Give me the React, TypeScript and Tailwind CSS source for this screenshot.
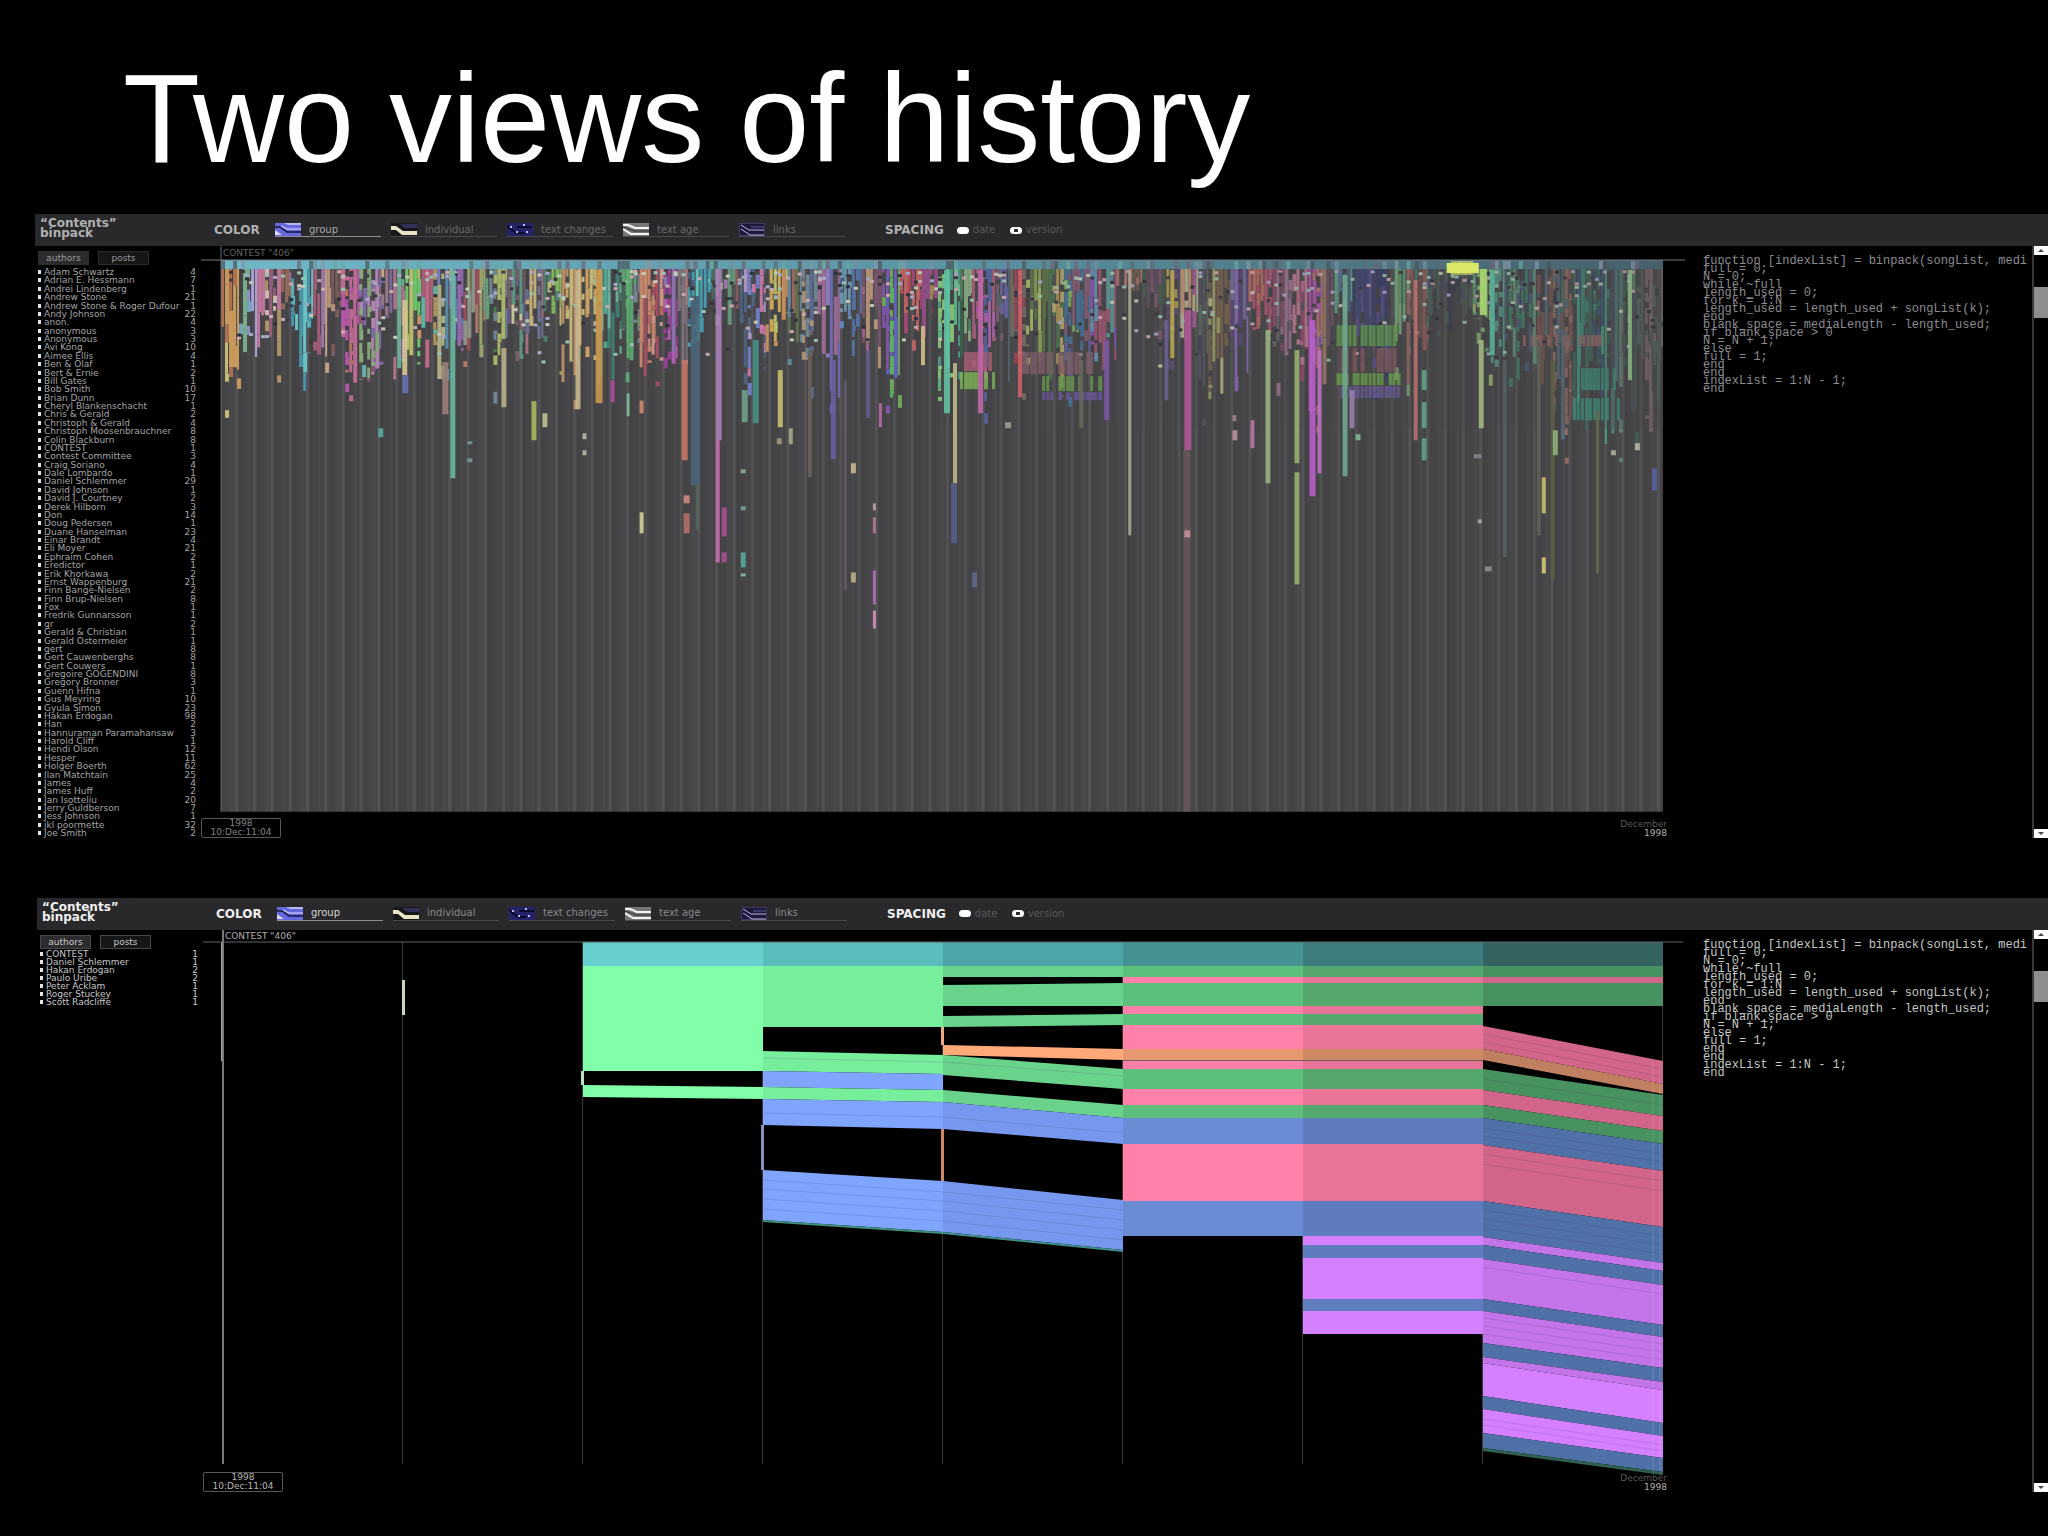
import React from "react";

type Author = [name: string, posts: number];
type Band = [leftTop: number, leftBottom: number, rightTop: number, rightBottom: number, color: string];
type Streak = [x: number, width: number, top: number, bottom: number, color: string];
type Region = [start: number, depth: number, colors: string[]];

const ALL_AUTHORS: Author[] = [
  ["Adam Schwartz", 4], ["Adrian E. Hessmann", 7], ["Andrei Lindenberg", 1], ["Andrew Stone", 21],
  ["Andrew Stone & Roger Dufour", 1], ["Andy Johnson", 22], ["anon.", 4], ["anonymous", 3], ["Anonymous", 3],
  ["Avi Kong", 10], ["Aimee Ellis", 4], ["Ben & Olaf", 1], ["Bert & Ernie", 2], ["Bill Gates", 1],
  ["Bob Smith", 10], ["Brian Dunn", 17], ["Cheryl Blankenschacht", 1], ["Chris & Gerald", 2],
  ["Christoph & Gerald", 4], ["Christoph Moosenbrauchner", 8], ["Colin Blackburn", 8], ["CONTEST", 1],
  ["Contest Committee", 3], ["Craig Soriano", 4], ["Dale Lombardo", 1], ["Daniel Schlemmer", 29],
  ["David Johnson", 1], ["David J. Courtney", 2], ["Derek Hilborn", 3], ["Don", 14], ["Doug Pedersen", 1],
  ["Duane Hanselman", 23], ["Einar Brandt", 4], ["Eli Moyer", 21], ["Ephraim Cohen", 2], ["Eredictor", 1],
  ["Erik Khorkawa", 2], ["Ernst Wappenburg", 21], ["Finn Bange-Nielsen", 2], ["Finn Brup-Nielsen", 8], ["Fox", 1],
  ["Fredrik Gunnarsson", 1], ["gr", 2], ["Gerald & Christian", 1], ["Gerald Ostermeier", 1], ["gert", 8],
  ["Gert Cauwenberghs", 8], ["Gert Couwers", 1], ["Gregoire GOGENDINI", 8], ["Gregory Bronner", 3],
  ["Guenn Hifna", 1], ["Gus Meyring", 10], ["Gyula Simon", 23], ["Hakan Erdogan", 98], ["Han", 2],
  ["Hannuraman Paramahansaw", 3], ["Harold Cliff", 1], ["Hendi Olson", 12], ["Hesper", 11],
  ["Holger Boerth", 62], ["Ilan Matchtain", 25], ["James", 4], ["James Huff", 2], ["Jan Isotteliu", 20],
  ["Jerry Guldberson", 7], ["Jess Johnson", 1], ["jkl poormette", 32], ["Joe Smith", 2],
];

const CONTEST_AUTHORS: Author[] = [
  ["CONTEST", 1], ["Daniel Schlemmer", 1], ["Hakan Erdogan", 2], ["Paulo Uribe", 2],
  ["Peter Acklam", 1], ["Roger Stuckey", 1], ["Scott Radcliffe", 1],
];

const CODE = `function [indexList] = binpack(songList, medi
full = 0;
N = 0;
while ~full
length_used = 0;
for k = 1:N
length_used = length_used + songList(k);
end
blank_space = mediaLength - length_used;
if blank_space > 0
N = N + 1;
else
full = 1;
end
end
indexList = 1:N - 1;
end`;

const TABS = ["group", "individual", "text changes", "text age", "links"];

/* ---------- dense overview chart ---------- */

const REGIONS: Region[] = [
  [0, 105, ["#e0a860", "#d8d080", "#c07850"]],
  [18, 100, ["#98a0e0", "#80c090", "#b8b0f0", "#7cb8d0"]],
  [36, 85, ["#d080a8", "#e0d0c0", "#a06080", "#c0a070"]],
  [60, 50, ["#a07060", "#a870a8"]],
  [70, 115, ["#58c8d0", "#70d8d8", "#4aa0b8"]],
  [92, 90, ["#a880b8", "#d8b090", "#b06080"]],
  [106, 45, ["#806060", "#c8a080"]],
  [120, 115, ["#c85ab8", "#c08060", "#d070a0"]],
  [138, 115, ["#8870b8", "#c090c0", "#9a5878", "#90b880"]],
  [160, 80, ["#e0b878", "#7c70a8", "#a88090"]],
  [172, 100, ["#b060c0", "#70c0a0", "#c07898"]],
  [184, 95, ["#70d870", "#c8d070", "#e0a070"]],
  [200, 105, ["#d07090", "#60c8b0", "#c0a060", "#b86080"]],
  [216, 105, ["#7888d8", "#a070c0", "#c0c090", "#5898b8"]],
  [242, 95, ["#98a090", "#c08070", "#a8b070", "#a85060"]],
  [264, 90, ["#68b080", "#b8c870", "#7890a0", "#488858"]],
  [286, 85, ["#d8d8a0", "#7060a0", "#60a088", "#806070"]],
  [304, 90, ["#b07890", "#d8c080", "#7078a0"]],
  [322, 75, ["#88c860", "#c8d078", "#508870"]],
  [340, 105, ["#e0b068", "#d8c880", "#c89870"]],
  [378, 115, ["#50b8a0", "#70c0a8", "#408878"]],
  [400, 85, ["#60b078", "#8090a0", "#486858"]],
  [418, 100, ["#c86860", "#e0a090", "#b05068", "#d89070"]],
  [442, 95, ["#c060c0", "#a040a0", "#9878c0"]],
  [456, 90, ["#887880", "#d08880"]],
  [466, 75, ["#48a8c0", "#60d8d0", "#4a6890"]],
  [490, 60, ["#a880b8", "#c8d0a0", "#507068"]],
  [506, 70, ["#8a6060", "#9870a0", "#6aa080"]],
  [518, 100, ["#7888d8", "#d880b0", "#b8a0d0", "#506888"]],
  [544, 90, ["#e0c060", "#d89860", "#c8d070", "#e0b858"]],
  [566, 80, ["#60784c", "#6890a8", "#a07060"]],
  [580, 85, ["#7890a0", "#b8a080", "#6070a0", "#806860"]],
  [596, 115, ["#7870c8", "#9888d0", "#a870a0"]],
  [618, 95, ["#5878b0", "#6890d0", "#4868a0", "#70a0b8"]],
  [640, 100, ["#b86898", "#c8a080", "#805870"]],
  [660, 115, ["#6868d0", "#60c868", "#8858b8", "#78b860"]],
  [678, 70, ["#c84858", "#b04878", "#d06868"]],
  [700, 75, ["#a05090", "#b09060", "#704858"]],
  [716, 125, ["#60c890", "#78d0a0", "#50a890", "#90d880"]],
  [738, 120, ["#386848", "#508860", "#90b888"]],
  [750, 125, ["#d050c0", "#b868b8", "#5868a8", "#b06080"]],
  [774, 120, ["#6a68a8", "#806078", "#586870"]],
  [788, 110, ["#a84858", "#7a7068", "#485878"]],
  [804, 90, ["#b0c868", "#90a858", "#607848"]],
  [826, 115, ["#b8a058", "#507850", "#c0b070"]],
  [842, 130, ["#6060a0", "#80b860", "#4878a0", "#886078"]],
  [868, 135, ["#9058c0", "#a85878", "#60a0a0", "#7098c0"]],
  [894, 30, ["#a06888", "#706050", "#b87870"]],
  [920, 45, ["#605060", "#805870", "#486050"]],
  [944, 75, ["#b8a850", "#605080", "#585068"]],
  [958, 70, ["#c8c098", "#b060a0", "#d0a080"]],
  [976, 110, ["#484a58", "#585868", "#607060"]],
  [986, 120, ["#a8a868", "#806850", "#c8c088"]],
  [1008, 110, ["#9070c0", "#604880", "#7870a8"]],
  [1026, 75, ["#c87068", "#c05878", "#d89070"]],
  [1050, 90, ["#905070", "#706878", "#a87898"]],
  [1070, 110, ["#c86890", "#d080a0", "#a04870"]],
  [1086, 150, ["#c058b8", "#b070c8", "#d08080"]],
  [1100, 110, ["#a88068", "#705868", "#c8a088"]],
  [1112, 60, ["#5878a0", "#486888", "#60b090"]],
  [1130, 110, ["#383e70", "#40487c", "#485868", "#5a5098"]],
  [1172, 120, ["#60a878", "#80b880", "#a87068"]],
  [1188, 110, ["#a06058", "#705850", "#508070"]],
  [1206, 60, ["#484c68", "#506058", "#383c50"]],
  [1250, 90, ["#90c078", "#68a878", "#a8c870"]],
  [1268, 110, ["#58a890", "#406070", "#60b8a0"]],
  [1282, 150, ["#40886c", "#506080", "#68a080", "#4c6068"]],
  [1314, 150, ["#805850", "#a07068", "#507060", "#587080"]],
  [1350, 160, ["#40907c", "#48a890", "#405878", "#407060"]],
  [1384, 150, ["#50807c", "#446050", "#688878", "#4c5460"]],
  [1414, 145, ["#506c5c", "#585c60", "#587868", "#806c74"]],
];

const STREAKS: Streak[] = [
  [229, 5, 10, 218, "#6ab8a0"], [221, 6, 102, 154, "#9a8078"], [181, 5, 40, 115, "#d8c898"], [181, 6, 115, 133, "#6870b0"],
  [280, 5, 88, 147, "#b8b088"], [310, 5, 141, 180, "#a8b860"], [321, 5, 153, 167, "#c0c090"], [354, 5, 10, 149, "#c8b890"],
  [374, 7, 10, 143, "#c89850"], [389, 4, 120, 142, "#a850a0"], [405, 3, 10, 98, "#60b070"], [405, 3, 133, 156, "#80b898"],
  [460, 6, 100, 200, "#c87868"], [469, 9, 40, 225, "#4a6478"], [474, 4, 225, 270, "#566458"], [494, 6, 8, 180, "#a880b8"],
  [494, 4, 180, 302, "#c870b0"], [500, 5, 247, 276, "#a85090"], [500, 5, 292, 302, "#a85090"], [462, 6, 253, 273, "#b07068"],
  [462, 6, 235, 243, "#d08880"], [418, 4, 252, 273, "#d0d098"], [520, 6, 130, 162, "#70a088"], [531, 6, 80, 163, "#4a9088"],
  [556, 5, 110, 167, "#c8c070"], [586, 4, 90, 217, "#68645c"], [609, 5, 100, 199, "#6860a0"], [622, 3, 120, 330, "#655868"],
  [644, 4, 90, 158, "#605c88"], [657, 3, 143, 167, "#b868a8"], [651, 3, 310, 344, "#b070b8"], [651, 3, 350, 368, "#d090b8"],
  [651, 3, 243, 250, "#b8a0b0"], [651, 3, 257, 273, "#b07898"], [629, 5, 203, 213, "#c8b890"], [629, 5, 312, 322, "#b8b088"],
  [731, 4, 103, 223, "#c0b888"], [729, 6, 223, 283, "#566088"], [722, 6, 10, 153, "#60c0a0"], [157, 5, 168, 177, "#58a8a0"],
  [141, 4, 105, 117, "#70b8b8"], [519, 5, 292, 307, "#58a898"], [519, 5, 313, 316, "#80b8a8"], [519, 5, 246, 250, "#78a090"],
  [519, 5, 209, 213, "#90a898"], [361, 4, 173, 179, "#b8b8a0"], [361, 4, 190, 195, "#b8b8a0"], [246, 5, 181, 184, "#789898"],
  [246, 5, 198, 202, "#789898"], [555, 5, 178, 184, "#a09878"], [567, 4, 168, 184, "#a8a888"], [699, 4, 66, 105, "#d0c088"],
  [906, 3, 10, 275, "#a8a890"], [962, 7, 50, 190, "#b05898"], [961, 7, 190, 551, "#68565a"], [962, 6, 270, 277, "#c89098"],
  [1072, 5, 90, 203, "#98b070"], [1072, 5, 212, 324, "#98b070"], [1043, 5, 70, 223, "#98b080"], [1087, 6, 60, 236, "#b860c8"],
  [1095, 4, 90, 213, "#c070c0"], [1120, 5, 15, 216, "#70a890"], [1256, 5, 80, 168, "#a0b880"], [1257, 7, 5, 55, "#a8d870"],
  [1191, 4, 20, 180, "#b87070"], [1199, 5, 110, 130, "#60a088"], [1199, 5, 142, 168, "#60a088"], [1199, 5, 178, 200, "#60a088"],
  [1319, 4, 217, 253, "#c8c070"], [1319, 4, 297, 313, "#d0c878"], [1280, 4, 100, 297, "#566064"], [1328, 4, 100, 320, "#5e5e46"],
  [1373, 3, 150, 313, "#66684c"], [1429, 5, 208, 230, "#5860a0"], [1405, 4, 10, 120, "#88b080"], [750, 5, 312, 327, "#606888"],
  [1127, 5, 130, 168, "#9880a8"], [948, 4, 10, 98, "#b8a850"], [942, 4, 60, 140, "#6c6090"], [796, 4, 10, 137, "#d06068"],
  [756, 5, 10, 153, "#c068a8"], [1267, 5, 10, 95, "#58b098"], [857, 4, 100, 168, "#68685c"], [882, 5, 80, 160, "#7858a0"],
  [1028, 4, 160, 188, "#b878a8"], [1010, 5, 170, 180, "#b89098"], [1314, 4, 80, 275, "#5c6056"], [1010, 4, 155, 161, "#a08090"],
  [783, 6, 162, 168, "#98a090"], [1255, 4, 259, 263, "#a8a8a8"], [1262, 7, 306, 311, "#8c8c94"], [1330, 5, 170, 195, "#90b078"],
  [1388, 5, 190, 195, "#a8b098"], [1412, 5, 183, 190, "#b0b8a0"], [1251, 8, 194, 198, "#80848c"], [1133, 5, 174, 180, "#80b898"],
];

function random(seed: number) {
  let state = seed;
  return () => {
    state = (state * 1664525 + 1013904223) % 4294967296;
    return state / 4294967296;
  };
}

function buildRevisions(): Streak[] {
  const next = random(29);
  const cells: Streak[] = [];
  REGIONS.forEach(([start, depth, colors], index) => {
    const end = index + 1 < REGIONS.length ? REGIONS[index + 1][0] : 1440;
    for (let x = start; x < end; x += 4) {
      const limit = depth * (0.45 + next() * 0.75);
      const own = colors[Math.floor(next() * colors.length)];
      const calm = next() > 0.4;
      let y = 9;
      while (y < limit) {
        const height = calm ? 14 + next() * 46 : 3 + next() * 9;
        const stop = Math.min(y + height, limit);
        if (next() < (calm ? 0.92 : 0.76)) {
          const color = next() < 0.7 ? own : colors[Math.floor(next() * colors.length)];
          const width = Math.min(next() < 0.5 ? 4 : 3, end - x);
          cells.push([x, width, y, stop, color]);
        }
        y = stop;
      }
      if (next() < 0.2) {
        const top = limit + 4 + next() * 30;
        cells.push([x, 4, top, top + 3 + next() * 10, own]);
      }
    }
  });
  for (let i = 0; i < 480; i++) {
    const x = Math.floor(next() * 359) * 4;
    const y = 10 + next() * next() * 105;
    const tint = ["#d8e0c8", "#a8d8c0", "#e0b8c0", "#3c3a44", "#b8b8e0", "#302f38"][Math.floor(next() * 6)];
    cells.push([x, 4, y, y + 3, tint]);
  }
  return cells;
}

/* Runs of one author's text that keep the same line across many revisions. */
function buildShared(): Streak[] {
  const next = random(11);
  const runs: Streak[] = [
    [1114, 64, 65, 86, "#64a850"], [1114, 64, 88, 112, "#8c5c60"], [1114, 64, 113, 125, "#72b04c"],
    [1114, 64, 126, 138, "#7060a8"], [738, 36, 112, 129, "#84bc58"], [738, 30, 92, 111, "#b06078"],
    [820, 60, 116, 131, "#6ca050"], [820, 60, 132, 140, "#7058a8"], [800, 70, 92, 114, "#86606c"],
    [1350, 48, 108, 130, "#3c9880"], [1350, 48, 138, 160, "#3ca088"], [1300, 80, 75, 86, "#9c6c68"],
  ];
  return runs.flatMap(([x, w, top, bottom, color]) => {
    const strips: Streak[] = [];
    for (let i = 0; i < w; i += 4) {
      if (next() < 0.75) strips.push([x + i, next() < 0.5 ? 4 : 3, top, bottom, color]);
    }
    return strips;
  });
}

function buildBand(): Streak[] {
  const next = random(7);
  const out: Streak[] = [];
  for (let x = 0; x < 1440; x += 4) {
    if (next() < 0.3) {
      const tint = ["#8898a8", "#5c6c70", "#7890a0", "#68a8a0", "#706478", "#4c5458"][Math.floor(next() * 6)];
      out.push([x, 4, 1, 9, tint]);
    }
  }
  return out;
}

const REVISIONS = buildRevisions();
const SHARED = buildShared();
const BAND = buildBand();

function Bars({ bars, className }: { bars: Streak[]; className?: string }) {
  return (
    <g className={className}>
      {bars.map(([x, w, top, bottom, color], i) => (
        <rect key={i} x={x} y={top} width={w} height={bottom - top} fill={color} />
      ))}
    </g>
  );
}

function OverviewChart() {
  return (
    <svg viewBox="0 0 1440 551" className="block h-auto w-full overflow-visible" role="img" aria-label="All revisions by author">
      <defs>
        <pattern id="revisions" width="35.5" height="551" patternUnits="userSpaceOnUse">
          <rect width="35.5" height="551" fill="#444346" />
          <rect x="8" width="5" height="551" fill="#49484b" />
          <rect x="14" width="3" height="551" fill="#545355" />
          <rect x="26" width="3" height="551" fill="#49484b" />
          <rect x="32" width="3" height="551" fill="#525153" />
          <rect x="18" width="2" height="551" fill="#403f42" />
        </pattern>
        <linearGradient id="teal">
          <stop offset="0" stopColor="#70b8c8" />
          <stop offset="0.5" stopColor="#5a94a4" />
          <stop offset="1" stopColor="#45606a" />
        </linearGradient>
        <linearGradient id="fade">
          <stop offset="0.4" stopColor="#444346" stopOpacity="0" />
          <stop offset="1" stopColor="#444346" stopOpacity="0.3" />
        </linearGradient>
      </defs>
      <rect width="1440" height="551" fill="url(#revisions)" />
      <Bars bars={REVISIONS} className="opacity-85" />
      <Bars bars={SHARED} className="opacity-80" />
      <rect width="1440" height="160" y="9" fill="url(#fade)" />
      <Bars bars={STREAKS} className="opacity-90" />
      <rect width="1440" height="9" fill="url(#teal)" />
      <Bars bars={BAND} className="opacity-70" />
      <rect x="1224" y="3" width="32" height="10" fill="#dce868" />
      <rect x="1228" y="1" width="22" height="14" fill="#dce868" opacity="0.6" />
      <path d="M-20 0H1462" stroke="#77787c" />
      <path d="M0 -14V551" stroke="#6c6c70" />
    </svg>
  );
}

/* ---------- contest detail chart ---------- */

const STEP = 180;

const COLUMNS: Band[][] = [
  [],
  [],
  [
    [0, 24, 0, 24, "#68cfd0"], [24, 129, 24, 129, "#80ffa8"], [143, 155, 145, 157, "#80ffa8"],
  ],
  [
    [0, 24, 0, 24, "#5bbcbc"], [24, 85, 24, 85, "#76ee9c"], [109, 129, 113, 132, "#76ee9c"],
    [129, 145, 132, 148, "#7fa5ff"], [145, 157, 148, 160, "#76ee9c"], [157, 183, 160, 187, "#7fa5ff"],
    [228, 278, 239, 290, "#7fa5ff"], [278, 280, 290, 292, "#3f8f7c"],
  ],
  [
    [0, 24, 0, 24, "#4ea5a7"], [24, 35, 24, 35, "#6ad38b"], [43, 64, 41, 64, "#6ad38b"],
    [74, 85, 72, 83, "#6ad38b"], [103, 113, 107, 118, "#ffa878"], [113, 133, 127, 147, "#6ad38b"],
    [148, 160, 163, 176, "#6ad38b"], [160, 187, 176, 202, "#7598ee"], [239, 290, 258, 308, "#7598ee"],
    [290, 292, 308, 310, "#3f8f8c"],
  ],
  [
    [0, 24, 0, 24, "#459293"], [24, 35, 24, 35, "#5dbf7c"], [35, 41, 35, 41, "#ff80a8"],
    [41, 64, 41, 64, "#5dbf7c"], [64, 72, 64, 72, "#ff80a8"], [72, 83, 72, 83, "#5dbf7c"],
    [83, 107, 83, 107, "#ff80a8"], [107, 118, 107, 118, "#e79870"], [118, 119, 118, 119, "#70605c"],
    [119, 127, 119, 127, "#ff80a8"], [127, 147, 127, 147, "#5dbf7c"], [147, 163, 147, 163, "#ff80a8"],
    [163, 176, 163, 176, "#5dbf7c"], [176, 202, 176, 202, "#6a8cd5"], [202, 259, 202, 259, "#ff80a8"],
    [259, 294, 259, 294, "#6a8cd5"],
  ],
  [
    [0, 24, 0, 24, "#3f7c7e"], [24, 35, 24, 35, "#54a86d"], [35, 41, 35, 41, "#e87498"],
    [41, 64, 41, 64, "#54a86d"], [64, 72, 64, 72, "#e87498"], [72, 83, 72, 83, "#54a86d"],
    [83, 107, 83, 107, "#e87498"], [107, 118, 107, 118, "#d08864"], [118, 119, 118, 119, "#70605c"],
    [119, 127, 119, 127, "#e87498"], [127, 147, 127, 147, "#54a86d"], [147, 163, 147, 163, "#e87498"],
    [163, 176, 163, 176, "#54a86d"], [176, 202, 176, 202, "#5f7dbe"], [202, 259, 202, 259, "#e87498"],
    [259, 294, 259, 294, "#5f7dbe"], [294, 303, 294, 303, "#d580ff"], [303, 316, 303, 316, "#5f7dbe"],
    [316, 357, 316, 357, "#d580ff"], [357, 369, 357, 369, "#5f7dbe"], [369, 392, 369, 392, "#d580ff"],
  ],
  [
    [0, 24, 0, 24, "#336462"], [24, 35, 24, 35, "#489160"], [35, 41, 35, 41, "#d2658a"],
    [41, 64, 41, 64, "#489160"], [84, 107, 119, 142, "#d2658a"], [107, 118, 142, 152, "#bf7f60"],
    [127, 148, 153, 174, "#489160"], [148, 163, 174, 189, "#d2658a"], [163, 176, 189, 202, "#489160"],
    [176, 203, 202, 229, "#5070a8"], [203, 259, 229, 285, "#d2658a"], [259, 295, 285, 321, "#5070a8"],
    [295, 303, 321, 329, "#c274e8"], [303, 317, 329, 343, "#5070a8"], [317, 357, 343, 383, "#c274e8"],
    [357, 369, 383, 395, "#5070a8"], [369, 401, 395, 426, "#c274e8"], [401, 415, 426, 440, "#5070a8"],
    [415, 421, 440, 448, "#c274e8"], [421, 454, 448, 481, "#d580ff"], [454, 467, 481, 494, "#5070a8"],
    [467, 491, 494, 516, "#d580ff"], [491, 506, 516, 530, "#5070a8"], [506, 509, 530, 533, "#2f6050"],
  ],
];

const MARKS: Streak[] = [
  [-2, 3, 0, 119, "#a8aca8"], [179, 3, 38, 73, "#c8d8c0"], [358, 3, 129, 143, "#b8e0c0"], [538, 3, 183, 228, "#8890c0"],
  [718, 3, 85, 103, "#f0a880"], [718, 3, 187, 239, "#d08868"],
];

const HAIRLINES = [
  [3, 116, 120], [3, 171, 175], [3, 238, 250], [3, 247, 259], [3, 257, 269], [3, 267, 279],
  [4, 120, 134], [4, 175, 191], [4, 250, 268], [4, 259, 278], [4, 269, 288], [4, 279, 298],
  [7, 92, 127], [7, 100, 135], [7, 137, 163], [7, 186, 212], [7, 194, 220], [7, 212, 239], [7, 222, 249],
  [7, 268, 294], [7, 277, 303], [7, 286, 312], [7, 325, 352], [7, 376, 402], [7, 384, 410], [7, 392, 418],
  [7, 477, 503], [7, 483, 509],
];

function ContestChart() {
  return (
    <svg viewBox="0 0 1440 526" className="block h-auto w-full overflow-visible" role="img" aria-label="Contest revisions">
      {[1, 2, 3, 4, 5, 6, 7, 8].map((i) => (
        <path key={i} d={`M${i * STEP - 0.5} 0V522`} stroke="#39393b" />
      ))}
      {COLUMNS.map((bands, column) =>
        bands.map(([lt, lb, rt, rb, color], i) => {
          const left = column * STEP;
          const right = left + STEP;
          return <path key={`${column}-${i}`} d={`M${left} ${lt}L${right} ${rt}V${rb}L${left} ${lb}Z`} fill={color} />;
        }),
      )}
      {HAIRLINES.map(([column, from, to], i) => (
        <path key={i} d={`M${column * STEP} ${from}L${column * STEP + STEP} ${to}`} stroke="#302850" strokeOpacity="0.15" />
      ))}
      <Bars bars={MARKS} />
      <path d="M1430 119V530M1437 119V533" stroke="#ffffff" strokeOpacity="0.15" />
      <path d="M-20 0H1460" stroke="#606264" />
      <path d="M0 -12V522" stroke="#77787a" strokeWidth="2" />
    </svg>
  );
}

/* ---------- shared chrome ---------- */

function TabIcon({ kind }: { kind: string }) {
  return (
    <svg viewBox="0 0 26 13" className="h-[13px] w-[26px] shrink-0" aria-hidden="true">
      {kind === "group" && (
        <>
          <rect width="26" height="13" fill="#6468dc" />
          <path d="M0 0h26v2H13L9 0z" fill="#b8b8f0" />
          <path d="M0 4h5l7 5h14" fill="none" stroke="#14143c" strokeWidth="1.5" />
          <path d="M6 3l6 3h14" fill="none" stroke="#e0e0ff" />
          <path d="M0 7l7 5H0z" fill="#d8d8ff" />
        </>
      )}
      {kind === "individual" && (
        <>
          <rect width="26" height="13" fill="#18181a" />
          <path d="M9 1h17v4H14z" fill="#34305c" />
          <path d="M0 3h5l7 5h14v4H11L5 7H0z" fill="#e8e4c4" />
        </>
      )}
      {kind === "text changes" && (
        <>
          <rect width="26" height="13" fill="#242268" />
          <path d="M0 3l9 7h8M10 4h15" fill="none" stroke="#0c0c28" strokeWidth="2" />
          <path d="M3 4h2M16 2h2M9 9h2M19 9h2" stroke="#b8b8ff" strokeWidth="2" />
        </>
      )}
      {kind === "text age" && (
        <>
          <rect width="26" height="13" fill="#77777a" />
          <path d="M0 2l5 0 7 3h14M0 6l8 5h18" fill="none" stroke="#f4f4f4" strokeWidth="2" />
          <path d="M0 4l11 4h15" fill="none" stroke="#2c2c2e" />
        </>
      )}
      {kind === "links" && (
        <>
          <rect x="0.5" y="0.5" width="25" height="12" fill="#1c1a38" stroke="#3c3866" />
          <path d="M2 2l8 5h15M2 6l9 6h14" fill="none" stroke="#b8b4e8" />
          <path d="M12 4h13" stroke="#5c58a0" />
        </>
      )}
    </svg>
  );
}

function Toolbar({ id, dim }: { id: string; dim: boolean }) {
  const strong = dim ? "text-[#b0b0b0]" : "text-[#f0f0f0]";
  return (
    <header className="flex h-8 items-center bg-[#29282b]">
      <h2 className={`w-[179px] shrink-0 self-start pt-1 pl-[5px] text-[12px] leading-[10px] font-bold ${strong}`}>
        “Contents”
        <br />
        binpack
      </h2>
      <span className={`w-[61px] shrink-0 text-[12px] leading-4 font-bold ${strong}`}>COLOR</span>
      <div className="flex gap-[10px]">
        {TABS.map((tab, i) => (
          <button
            key={tab}
            type="button"
            className={`flex h-[14px] w-[106px] items-center gap-2 border-b text-[10px] leading-3 ${
              i === 0 ? "border-[#8c8c90]" : "border-[#49484c]"
            } ${i > 0 ? (dim ? "text-[#68686a]" : "text-[#88888a]") : dim ? "text-[#a8a8a8]" : "text-[#d8d8d8]"}`}
          >
            <TabIcon kind={tab} />
            {tab}
          </button>
        ))}
      </div>
      <fieldset className="ml-10 flex items-center text-[10px] leading-3 text-[#58585a]">
        <legend className={`float-left mr-[13px] text-[12px] leading-4 font-bold ${strong}`}>SPACING</legend>
        <label className="flex w-[53px] items-center gap-1">
          <input type="radio" name={id} className="h-[7px] w-3 appearance-none rounded-full bg-white" />
          date
        </label>
        <label className="flex items-center gap-1">
          <input
            type="radio"
            name={id}
            defaultChecked
            className="h-[7px] w-3 appearance-none rounded-full border-2 border-white bg-white checked:border-x-4 checked:bg-[#303034]"
          />
          version
        </label>
      </fieldset>
    </header>
  );
}

function Authors({ authors, dim }: { authors: Author[]; dim: boolean }) {
  return (
    <div className="flex flex-col pl-[3px]">
      <div className={`flex gap-[9px] pt-[5px] ${dim ? "pb-[3px]" : "pb-px"}`}>
        {["authors", "posts"].map((label, i) => (
          <button
            key={label}
            type="button"
            className={`h-[14px] w-[51px] border text-[9px] leading-[10px] ${i === 0 ? "bg-[#2c2c2e]" : "bg-[#161617]"} ${
              dim ? "border-[#2c2c2e] text-[#989898]" : "border-[#48484a] text-[#c8c8c8]"
            }`}
          >
            {label}
          </button>
        ))}
      </div>
      <ul
        className={`flex w-[158px] flex-col text-[9px] leading-[8px] ${
          dim ? "flex-1 justify-between text-[#a4a4a4]" : "text-[#c8c8c8]"
        }`}
      >
        {authors.map(([name, posts]) => (
          <li key={name} className="flex items-center gap-[3px]">
            <span className="h-1 w-[3px] shrink-0 bg-[#e4e4e4]" />
            <span className="w-0 flex-1 overflow-x-clip whitespace-nowrap">{name}</span>
            <span>{posts}</span>
          </li>
        ))}
      </ul>
    </div>
  );
}

function Scrollbar() {
  return (
    <div className="flex w-4 shrink-0 flex-col border-l-2 border-[#3a3a3c] bg-black">
      <button type="button" aria-label="Scroll up" className="flex h-[9px] items-center justify-center bg-white">
        <svg viewBox="0 0 6 3" className="h-[3px] w-[6px]" aria-hidden="true">
          <path d="M0 3L3 0l3 3z" fill="#444" />
        </svg>
      </button>
      <div className="mt-8 h-[31px] bg-[#8e8e90]" />
      <button type="button" aria-label="Scroll down" className="mt-auto flex h-[9px] items-center justify-center bg-white">
        <svg viewBox="0 0 6 3" className="h-[3px] w-[6px]" aria-hidden="true">
          <path d="M0 0h6L3 3z" fill="#444" />
        </svg>
      </button>
    </div>
  );
}

function HistoryPanel({
  id,
  dim,
  className,
  authors,
  children,
}: {
  id: string;
  dim: boolean;
  className: string;
  authors: Author[];
  children: React.ReactNode;
}) {
  return (
    <section className={className}>
      <Toolbar id={id} dim={dim} />
      <div className="grid grid-cols-[186px_minmax(0,1fr)_385px]">
        <Authors authors={authors} dim={dim} />
        <div>
          <p className={`pl-[2px] text-[9px] ${dim ? "h-[14px] leading-[14px] text-[#606060]" : "h-3 leading-3 text-[#b0b0b0]"}`}>
            CONTEST "406"
          </p>
          {children}
          <div className={`-mr-1 -ml-5 flex justify-between text-[9px] leading-[9px] ${dim ? "pt-[6px]" : "pt-1"}`}>
            <time
              className={`w-20 rounded-xs border border-[#58585a] text-center ${dim ? "text-[#808080]" : "text-[#b8b8b8]"}`}
            >
              1998
              <br />
              10:Dec:11:04
            </time>
            <p className="pt-[2px] text-right text-[#58585a]">
              December
              <br />
              <span className="text-[#b0b0b0]">1998</span>
            </p>
          </div>
        </div>
        <div className="flex justify-between">
          <pre
            className={`w-0 flex-1 pt-[11px] pl-10 font-['Liberation_Mono',monospace] text-[12px] leading-[8px] ${
              dim ? "text-[#8c8c90]" : "text-[#c4c8c4]"
            }`}
          >
            {CODE}
          </pre>
          <Scrollbar />
        </div>
      </div>
    </section>
  );
}

export default function App() {
  return (
    <main className="min-h-screen overflow-hidden bg-black font-['DejaVu_Sans',sans-serif] text-white">
      <h1 className="pt-14 pb-8 pl-[123px] font-['Liberation_Sans',Arial,sans-serif] text-[126px] leading-none">
        Two views of history
      </h1>
      <HistoryPanel id="spacing-all" dim className="ml-[35px]" authors={ALL_AUTHORS}>
        <OverviewChart />
      </HistoryPanel>
      <HistoryPanel id="spacing-contest" dim={false} className="mt-[60px] ml-[37px]" authors={CONTEST_AUTHORS}>
        <ContestChart />
      </HistoryPanel>
    </main>
  );
}
